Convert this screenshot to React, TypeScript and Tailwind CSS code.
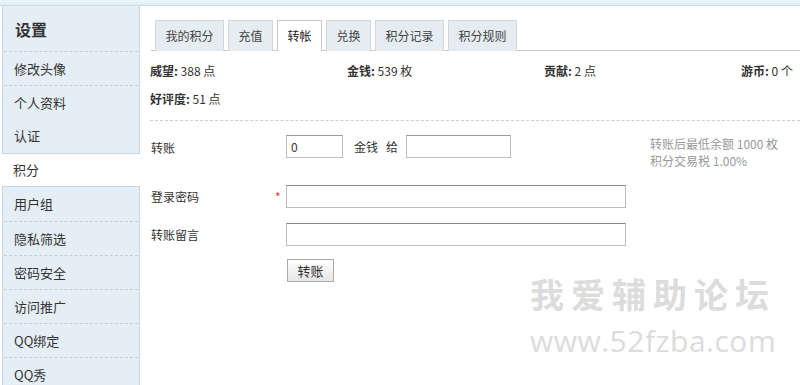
import React from 'react';

const menu = ['修改头像', '个人资料', '认证', '积分', '用户组', '隐私筛选', '密码安全', '访问推广', 'QQ绑定', 'QQ秀'];
const tabs = ['我的积分', '充值', '转帐', '兑换', '积分记录', '积分规则'];
const stats = [
  { label: '威望:', value: '388 点' },
  { label: '金钱:', value: '539 枚' },
  { label: '贡献:', value: '2 点' },
  { label: '游币:', value: '0 个' },
  { label: '好评度:', value: '51 点' },
];

const font = { fontFamily: '"Noto Sans CJK SC", "Liberation Sans", sans-serif' };

const App: React.FC = () => {
  return (
    <div className="w-[800px] h-[385px] overflow-hidden bg-white text-[12px] text-[#333]" style={font}>
      {/* top strip */}
      <div className="h-[6px] bg-gradient-to-b from-[#eaf6fb] to-[#dff0f8] border-b border-[#c9dbe6]" />

      <div className="flex">
        {/* sidebar */}
        <div className="ml-[2px] w-[138px] h-[380px] bg-[#e5eef5] border-l border-r border-[#c5d7e4] shrink-0">
          <div className="h-[45px] flex items-center pl-[12px] text-[16px] font-bold text-[#333]">设置</div>
          {menu.map((m, i) => {
            const active = m === '积分';
            const nextActive = menu[i + 1] === '积分';
            const prevActive = menu[i - 1] === '积分';
            if (active) {
              return (
                <div key={m} className="h-[34px] -mr-[1px] flex items-center pl-[11px] bg-white border-t border-b border-[#c5d7e4] -ml-[1px] text-[13px]">
                  {m}
                </div>
              );
            }
            return (
              <div key={m} className={`h-[34px] flex items-center pl-[11px] text-[13px] mx-[1px] ${prevActive || nextActive ? '' : 'border-t border-dashed border-[#c6ccd2]'}`}>
                <span className="-ml-[1px]">{m}</span>
              </div>
            );
          })}
        </div>

        {/* main */}
        <div className="flex-1 relative">
          {/* tabs */}
          <div className="ml-[11px] mt-[14px] flex border-b border-[#c8c8c8] pl-[4px] gap-[4px]">
            {tabs.map((t) => {
              const active = t === '转帐';
              return (
                <div
                  key={t}
                  className={`h-[31px] px-0 flex items-center justify-center whitespace-nowrap border border-b-0 -mb-[1px] ${
                    active ? 'bg-white border-[#c8c8c8] pb-[1px] text-[#222]' : 'bg-[#e5edf2] border-[#cfd6dc] text-[#444]'
                  }`}
                  style={{ width: t.length === 4 ? 69 : 45 }}
                >
                  {t}
                </div>
              );
            })}
          </div>

          {/* stats */}
          <div className="ml-[10px] grid grid-cols-[197px_197px_197px_1fr] pt-[12px] leading-[16px]">
            {stats.map((s, i) => (
              <div key={i} className={`h-[28px] whitespace-nowrap ${i === 4 ? 'col-span-4' : ''}`}>
                <span className="font-bold">{s.label}</span> {s.value}
              </div>
            ))}
          </div>
          <div className="ml-[10px] mt-[1px] border-t border-dashed border-[#cfcfcf]" />

          {/* form */}
          <div className="ml-[11px] mt-[14px]">
            <div className="flex items-start h-[50px]">
              <div className="w-[135px] pt-[4px]">转账</div>
              <input
                defaultValue="0"
                className="w-[57px] h-[23px] border border-[#bdbdbd] border-t-[#999] px-[4px] text-[12px] text-[#333] outline-none"
              />
              <span className="ml-[11px] pt-[3px]">金钱</span>
              <span className="ml-[8px] pt-[3px]">给</span>
              <input className="ml-[8px] w-[105px] h-[23px] border border-[#bdbdbd] border-t-[#999] outline-none" />
              <div className="ml-[139px] text-[#999] leading-[17px] pt-[0px] whitespace-nowrap">
                <div>转账后最低余额 1000 枚</div>
                <div>积分交易税 1.00%</div>
              </div>
            </div>

            <div className="flex items-center h-[23px]">
              <div className="w-[124px]">登录密码</div>
              <span className="w-[11px] text-[#e33] text-[12px]">*</span>
              <input className="w-[340px] h-[23px] border border-[#bdbdbd] border-t-[#888] outline-none" />
            </div>

            <div className="flex items-center h-[23px] mt-[15px]">
              <div className="w-[135px]">转账留言</div>
              <input className="w-[340px] h-[23px] border border-[#bdbdbd] border-t-[#888] outline-none" />
            </div>

            <div className="mt-[13px] pl-[136px]">
              <button className="w-[47px] h-[23px] border border-[#aaa] bg-gradient-to-b from-white to-[#e6e6e6] text-[13px] text-[#333]">
                转账
              </button>
            </div>
          </div>

          {/* watermark */}
          <div className="absolute left-[390px] top-[268px] text-[#dcdcdc] select-none pointer-events-none">
            <div className="text-[34px] font-bold tracking-[7px] leading-[40px]">我爱辅助论坛</div>
            <div className="mt-[10px] text-[30px] leading-[34px] tracking-[0.5px]" style={{ fontFamily: '"Open Sans", "Liberation Sans", sans-serif' }}>www.52fzba.com</div>
          </div>
        </div>
      </div>
    </div>
  );
};

export default App;
